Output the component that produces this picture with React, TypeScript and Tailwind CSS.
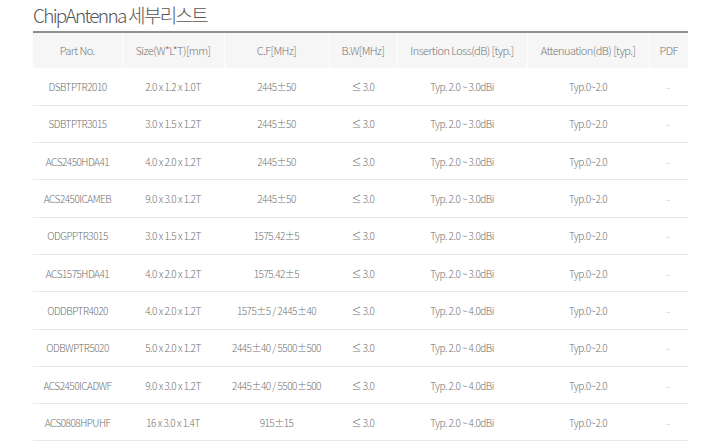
const cols = [
  { label: "Part No.", w: "w-[89px]" },
  { label: "Size(W*L*T)[mm]", w: "w-[102px]" },
  { label: "C.F[MHz]", w: "w-[105px]" },
  { label: "B.W[MHz]", w: "w-[68px]" },
  { label: "Insertion Loss(dB) [typ.]", w: "w-[130px]" },
  { label: "Attenuation(dB) [typ.]", w: "w-[122px]" },
  { label: "PDF", w: "w-[39px]" },
];

const rows = [
  ["DSBTPTR2010", "2.0 x 1.2 x 1.0T", "2445±50", "≤ 3.0", "Typ. 2.0 ~ 3.0dBi"],
  ["SDBTPTR3015", "3.0 x 1.5 x 1.2T", "2445±50", "≤ 3.0", "Typ. 2.0 ~ 3.0dBi"],
  ["ACS2450HDA41", "4.0 x 2.0 x 1.2T", "2445±50", "≤ 3.0", "Typ. 2.0 ~ 3.0dBi"],
  ["ACS2450ICAMEB", "9.0 x 3.0 x 1.2T", "2445±50", "≤ 3.0", "Typ. 2.0 ~ 3.0dBi"],
  ["ODGPPTR3015", "3.0 x 1.5 x 1.2T", "1575.42±5", "≤ 3.0", "Typ. 2.0 ~ 3.0dBi"],
  ["ACS1575HDA41", "4.0 x 2.0 x 1.2T", "1575.42±5", "≤ 3.0", "Typ. 2.0 ~ 3.0dBi"],
  ["ODDBPTR4020", "4.0 x 2.0 x 1.2T", "1575±5 / 2445±40", "≤ 3.0", "Typ. 2.0 ~ 4.0dBi"],
  ["ODBWPTR5020", "5.0 x 2.0 x 1.2T", "2445±40 / 5500±500", "≤ 3.0", "Typ. 2.0 ~ 4.0dBi"],
  ["ACS2450ICADWF", "9.0 x 3.0 x 1.2T", "2445±40 / 5500±500", "≤ 3.0", "Typ. 2.0 ~ 4.0dBi"],
  ["ACS0808HPUHF", "16 x 3.0 x 1.4T", "915±15", "≤ 3.0", "Typ. 2.0 ~ 4.0dBi"],
];

export default function App() {
  return (
    <div
      className="w-[720px] h-[448px] bg-white overflow-hidden pl-[33px] pt-[1px]"
      style={{ fontFamily: '"Noto Sans CJK KR", "Noto Sans", sans-serif' }}
    >
      <h1 className="text-[19px] leading-[28px] font-light text-[#555] tracking-[-0.09em] h-[30px]">
        ChipAntenna 세부리스트
      </h1>

      <table className="w-[655px] table-fixed border-collapse">
        <thead>
          <tr className="h-[36px]">
            {cols.map((c, i) => (
              <th
                key={i}
                className={`${c.w} p-0 bg-[#f6f6f6] border-t-2 border-t-[#8f8f8f] ${
                  i > 0 ? "border-l border-l-white" : ""
                } text-[11px] font-light text-[#777] tracking-[-0.05em] text-center`}
              >
                {c.label}
              </th>
            ))}
          </tr>
        </thead>
        <tbody>
          {rows.map((r, i) => (
            <tr key={i} className="h-[37.3px] border-b border-b-[#e8e8e8]">
              {r.map((v, j) => (
                <td
                  key={j}
                  className="p-0 text-center text-[10px] font-light text-[#707070] tracking-[-0.05em] whitespace-nowrap"
                >
                  {v}
                </td>
              ))}
              <td className="p-0 text-center text-[10px] font-light text-[#707070] tracking-[-0.05em]">
                Typ.0~2.0
              </td>
              <td className="p-0 text-center text-[10px] font-light text-[#b0b0b0]">-</td>
            </tr>
          ))}
        </tbody>
      </table>
    </div>
  );
}
